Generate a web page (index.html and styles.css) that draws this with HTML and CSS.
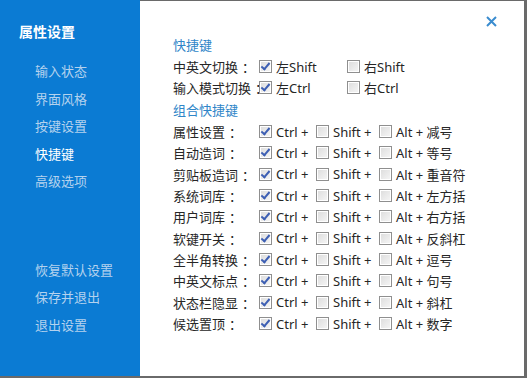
FILE: index.html
```html
<!DOCTYPE html>
<html lang="zh-CN">
<head>
  <meta charset="UTF-8">
  <title>属性设置</title>
  <link rel="stylesheet" href="styles.css">
</head>
<body>
  <div class="window">
    <div class="sidebar">
      <div class="title">属性设置</div>
      <ul class="menu">
        <li>输入状态</li>
        <li>界面风格</li>
        <li>按键设置</li>
        <li class="active">快捷键</li>
        <li>高级选项</li>
      </ul>
      <ul class="menu bottom">
        <li>恢复默认设置</li>
        <li>保存并退出</li>
        <li>退出设置</li>
      </ul>
    </div>

    <div class="main">
      <span class="close">
        <svg width="11" height="11" viewBox="0 0 11 11"><path d="M1 1 L10 10 M10 1 L1 10" stroke="#3a8ccf" stroke-width="2"/></svg>
      </span>

      <div class="heading">快捷键</div>
      <div class="row simple">
        <span class="label">中英文切换<span class="colon">：</span></span>
        <span class="opt"><i class="cb on"></i>左Shift</span>
        <span class="opt"><i class="cb"></i>右Shift</span>
      </div>
      <div class="row simple">
        <span class="label">输入模式切换<span class="colon">：</span></span>
        <span class="opt"><i class="cb on"></i>左Ctrl</span>
        <span class="opt"><i class="cb"></i>右Ctrl</span>
      </div>

      <div class="heading second">组合快捷键</div>
      <div id="combos"></div>
    </div>
  </div>

  <script>
    const combos = [
      ['属性设置', '减号'],
      ['自动造词', '等号'],
      ['剪贴板造词', '重音符'],
      ['系统词库', '左方括'],
      ['用户词库', '右方括'],
      ['软键开关', '反斜杠'],
      ['全半角转换', '逗号'],
      ['中英文标点', '句号'],
      ['状态栏隐显', '斜杠'],
      ['候选置顶', '数字']
    ];

    const box = document.getElementById('combos');
    combos.forEach(function(c) {
      const row = document.createElement('div');
      row.className = 'row combo';
      row.innerHTML =
        '<span class="label">' + c[0] + '<span class="colon">：</span></span>' +
        '<span class="opt"><i class="cb on"></i>Ctrl +</span>' +
        '<span class="opt"><i class="cb"></i>Shift +</span>' +
        '<span class="opt"><i class="cb"></i>Alt + ' + c[1] + '</span>';
      box.appendChild(row);
    });
  </script>
</body>
</html>
```

FILE: styles.css
```css
body {
  margin: 0;
  font-family: "Noto Sans", "Noto Sans CJK SC", sans-serif;
  background: #fff;
}

.window {
  width: 527px;
  height: 378px;
  box-sizing: border-box;
  display: flex;
  border-bottom: 2px solid #6a6a6a;
  border-right: 3px solid #6a6a6a;
  border-top: 1px solid #6a6a6a;
}

.sidebar {
  width: 140px;
  margin-top: -1px;
  background: #0b7bd3;
  display: flex;
  flex-direction: column;
  padding-bottom: 37px;
}

.title {
  color: #fff;
  font-weight: bold;
  font-size: 14px;
  line-height: 20px;
  padding: 22px 0 0 19px;
}

.menu {
  list-style: none;
  margin: 16px 0 0;
  padding: 0 0 0 35px;
}

.menu li {
  font-size: 13px;
  line-height: 27.5px;
  color: #b4d2ee;
}

.menu li.active {
  color: #fff;
}

.menu.bottom {
  margin-top: auto;
}

.main {
  flex: 1;
  position: relative;
  padding: 34px 0 0 33px;
  font-size: 13px;
  color: #262626;
}

.close {
  position: absolute;
  left: 346px;
  top: 15px;
  line-height: 0;
}

.heading {
  color: #2f86c8;
  line-height: 21px;
}

.heading.second {
  margin-top: 2px;
}

.row {
  display: flex;
  align-items: center;
  white-space: nowrap;
}

.row.simple {
  height: 21px;
}

.row.combo {
  height: 21.33px;
}

.label {
  width: 86px;
}

.colon {
  margin-left: 4px;
}

.opt {
  display: flex;
  align-items: center;
}

.simple .opt {
  width: 88px;
}

.combo .opt:nth-child(2) {
  width: 57px;
}

.combo .opt:nth-child(3) {
  width: 63px;
}

.cb {
  width: 11px;
  height: 11px;
  border: 1px solid #8f8f8f;
  background: linear-gradient(135deg, #dcdcdc, #f6f6f6);
  box-shadow: inset 0 0 0 1px #fff;
  margin-right: 4px;
  position: relative;
}

.cb.on::after {
  content: "";
  position: absolute;
  left: 3px;
  top: 0px;
  width: 3px;
  height: 7px;
  border: solid #3d5fb3;
  border-width: 0 2px 2px 0;
  transform: rotate(40deg);
}
```
